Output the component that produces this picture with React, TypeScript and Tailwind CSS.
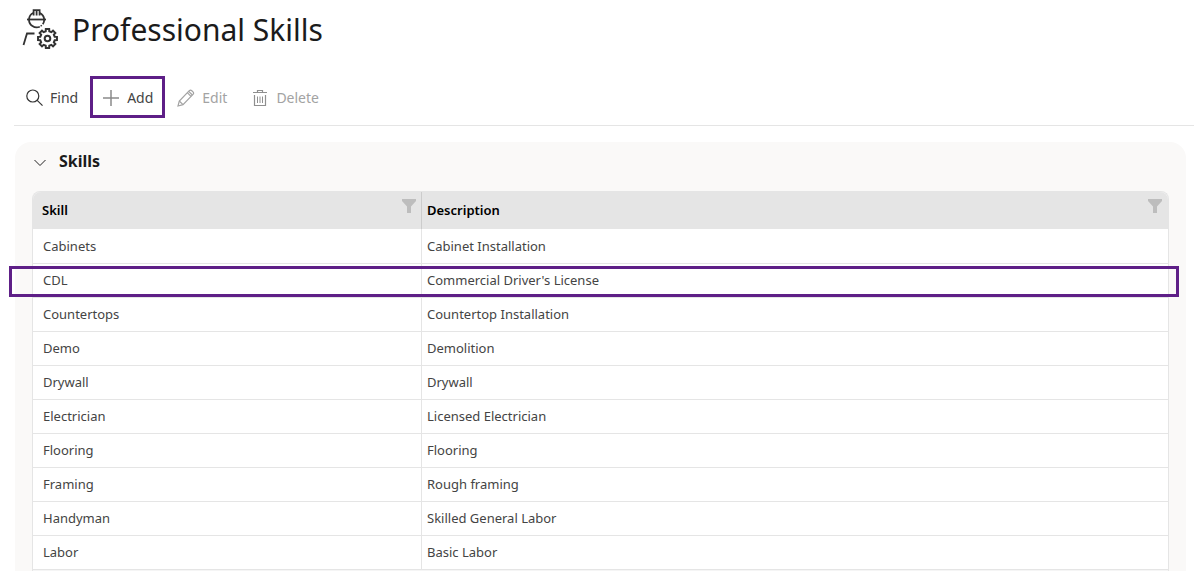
import React from "react";

interface Skill {
  name: string;
  description: string;
  highlighted?: boolean;
}

const skills: Skill[] = [
  { name: "Cabinets", description: "Cabinet Installation" },
  { name: "CDL", description: "Commercial Driver's License", highlighted: true },
  { name: "Countertops", description: "Countertop Installation" },
  { name: "Demo", description: "Demolition" },
  { name: "Drywall", description: "Drywall" },
  { name: "Electrician", description: "Licensed Electrician" },
  { name: "Flooring", description: "Flooring" },
  { name: "Framing", description: "Rough framing" },
  { name: "Handyman", description: "Skilled General Labor" },
  { name: "Labor", description: "Basic Labor" },
];

// eight flat teeth around the centre, two outer and two inner points each
const gearPoints = Array.from({ length: 8 }, (_, i) =>
  [
    [-14, 7.4],
    [-10, 9.6],
    [10, 9.6],
    [14, 7.4],
  ].map(([offset, radius]) => {
    const angle = ((i * 45 + offset) * Math.PI) / 180;
    return `${(25.5 + radius * Math.cos(angle)).toFixed(2)},${(29.5 + radius * Math.sin(angle)).toFixed(2)}`;
  })
)
  .flat()
  .join(" ");

function WorkerIcon() {
  return (
    <svg width="38" height="42" viewBox="0 0 38 42" fill="none" stroke="#333" strokeWidth="1.8">
      <path d="M5 10.500h19" />
      <path d="M7 10.500a7.700 7.700 0 0 1 4.600-6.700M22.200 10.500a7.700 7.700 0 0 0-4.800-6.700" />
      <path d="M11.600 6.500V1.200h6v5.300M14.600 1.500v5" />
      <path d="M7 10.500a7.700 7.700 0 0 0 10.800 7.200M22.200 10.500a7.700 7.700 0 0 1-1.400 4.800" />
      <path d="M18.600 17.300l1.200-1" strokeWidth="1.400" />
      <path d="M1.500 36l3.500-11.500h7.500" />
      <polygon points={gearPoints} strokeWidth="2" />
      <circle cx="25.500" cy="29.500" r="2.800" strokeWidth="2" />
    </svg>
  );
}

function SearchIcon() {
  return (
    <svg width="17" height="18" viewBox="0 0 17 18" fill="none" stroke="#333" strokeWidth="1.200">
      <circle cx="6.800" cy="7" r="6" />
      <path d="M11.200 11.400l5.300 5.300" />
    </svg>
  );
}

function PlusIcon() {
  return (
    <svg width="18" height="18" viewBox="0 0 18 18" fill="none" stroke="#8a8a8a" strokeWidth="1.500">
      <path d="M9 1v16M1 9h16" />
    </svg>
  );
}

function PencilIcon() {
  return (
    <svg width="18" height="18" viewBox="0 0 18 18" fill="none" stroke="#a3a3a3" strokeWidth="1.200">
      <path d="M1 17l1.300-5L12.300 1.700a1.800 1.800 0 0 1 2.500 0l1.200 1.200a1.800 1.800 0 0 1 0 2.500L6 15.700z" />
      <path d="M2.300 12l3.700 3.700M10.300 3.700l3.700 3.700M11.700 2.300L15.400 6" />
    </svg>
  );
}

function TrashIcon() {
  return (
    <svg width="18" height="18" viewBox="0 0 18 18" fill="none" stroke="#8f8f8f">
      <path d="M2 3.500h14M6.500 3.500v-2h5v2M3.500 6v10.500h11V6" strokeWidth="1.200" />
      <path d="M6.500 7.500V14M9 7.500V14M11.500 7.500V14" />
    </svg>
  );
}

function FilterIcon() {
  return (
    <svg width="14" height="14" viewBox="0 0 14 14" fill="#bdbdbd">
      <path d="M0 0h14v2L9 7.500V14H5V7.500L0 2z" />
    </svg>
  );
}

interface ToolButtonProps {
  icon: React.ReactNode;
  label: string;
  disabled?: boolean;
  highlighted?: boolean;
}

function ToolButton({ icon, label, disabled, highlighted }: ToolButtonProps) {
  return (
    <button
      type="button"
      disabled={disabled}
      className="relative flex h-[42px] items-center gap-[7px] px-3 pt-0.5 text-sm text-[#444] disabled:text-[#a3a3a3]"
    >
      {icon}
      {label}
      {highlighted && <span className="absolute inset-0 border-3 border-[#5e1f87]" />}
    </button>
  );
}

interface HeaderCellProps {
  label: string;
  className: string;
}

function HeaderCell({ label, className }: HeaderCellProps) {
  return (
    <th scope="col" className={`h-[37px] bg-[#e5e5e5] p-0 pb-0.5 text-left font-semibold text-black ${className}`}>
      <div className="flex items-center justify-between">
        {label}
        <button type="button" aria-label={`Filter ${label}`} className="mb-2">
          <FilterIcon />
        </button>
      </div>
    </th>
  );
}

export default function App() {
  return (
    <div className="flex min-h-screen flex-col bg-white pl-[14px] font-['Noto_Sans',sans-serif] text-[#444]">
      <header className="flex h-[60px] items-center gap-3 pl-2">
        <WorkerIcon />
        <h1 className="text-[30px] leading-10 text-[#1b1b1b]">Professional Skills</h1>
      </header>

      <div role="toolbar" className="flex border-b border-[#e5e5e5] pt-4 pb-[7px]">
        <ToolButton icon={<SearchIcon />} label="Find" />
        <ToolButton icon={<PlusIcon />} label="Add" highlighted />
        <ToolButton icon={<PencilIcon />} label="Edit" disabled />
        <ToolButton icon={<TrashIcon />} label="Delete" disabled />
      </div>

      <section className="mt-4 mr-2 ml-px flex grow flex-col rounded-t-2xl bg-[#faf9f8] px-[17px]">
        <button
          type="button"
          aria-expanded="true"
          className="flex h-[38px] items-center gap-3 self-start text-base font-bold text-[#1b1b1b]"
        >
          <svg width="15" height="15" viewBox="0 0 15 15" fill="none" stroke="#222">
            <path d="M2.500 6L8 11.500 13.500 6" />
          </svg>
          Skills
        </button>

        <div className="mt-[11px] flex grow flex-col rounded-t-lg border-x border-t border-[#e5e5e5] bg-[#f5f5f5]">
          <table className="w-full table-fixed border-separate border-spacing-0 text-[13px] leading-5">
            <colgroup>
              <col className="w-[389px]" />
              <col />
            </colgroup>
            <thead>
              <tr>
                <HeaderCell label="Skill" className="rounded-tl-lg border-r border-[#cccccc] pr-[5px] pl-[9px]" />
                <HeaderCell label="Description" className="rounded-tr-lg pr-1.5 pl-[5px]" />
              </tr>
            </thead>
            <tbody>
              {skills.map((skill) => (
                <tr key={skill.name} className="relative h-[34px] first:h-[35px]">
                  <td className="border-r border-b border-[#e5e5e5] bg-white p-0 pb-px pl-[10px]">
                    {skill.name}
                    {skill.highlighted && (
                      <span className="pointer-events-none absolute top-[2px] -right-[11px] bottom-[1px] -left-6 border-3 border-[#5e1f87]" />
                    )}
                  </td>
                  <td className="border-b border-[#e5e5e5] bg-white p-0 pb-px pl-[5px]">{skill.description}</td>
                </tr>
              ))}
            </tbody>
          </table>
        </div>
      </section>
    </div>
  );
}
